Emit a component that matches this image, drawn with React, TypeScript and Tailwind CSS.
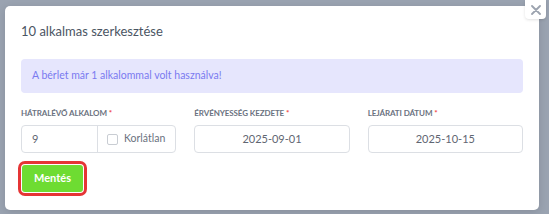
import * as React from 'react'

const FONT = { fontFamily: 'Lato, "Noto Sans", sans-serif' }

function Label({ text }: { text: string }) {
  return (
    <div className="mb-[6px] text-[8px] font-bold uppercase leading-[12px] tracking-[-0.1px] text-[#6b7280]">
      {text} <span className="text-[#ef4444]">*</span>
    </div>
  )
}

function DateField({ label, value }: { label: string; value: string }) {
  return (
    <div>
      <Label text={label} />
      <div className="flex h-[28px] items-center justify-center rounded-[4px] border border-[#dcdfe4] text-[11px] text-[#5f6672]">
        {value}
      </div>
    </div>
  )
}

export default function App() {
  return (
    <div
      className="relative h-[214px] w-[549px] overflow-hidden bg-[#9aa3b1] pl-[5px] pt-[6px]"
      style={FONT}
    >
      {/* modal */}
      <div className="flex h-[204px] w-[534px] flex-col rounded-[5px] bg-white px-[16px] pt-[17px] shadow-[0_2px_8px_rgba(0,0,0,0.12)]">
        <h2 className="text-[13px] font-normal leading-[16px] text-[#4b5563]">
          10 alkalmas szerkesztése
        </h2>

        <div className="mt-[20px] flex h-[34px] items-center rounded-[4px] bg-[#e6e6fd] px-[11px] text-[10.5px] text-[#7a7af0]">
          A bérlet már 1 alkalommal volt használva!
        </div>

        <div className="mt-[14px] grid grid-cols-3 gap-[18px]">
          <div>
            <Label text="Hátralévő alkalom" />
            <div className="flex h-[28px] rounded-[4px] border border-[#dcdfe4]">
              <div className="flex w-[76px] items-center border-r border-[#dcdfe4] pl-[10px] text-[11px] text-[#5f6672]">
                9
              </div>
              <div className="flex flex-1 items-center gap-[6px] pl-[9px] text-[10.5px] text-[#6b7280]">
                <span className="h-[11px] w-[11px] rounded-[2px] border border-[#c9cdd3]" />
                Korlátlan
              </div>
            </div>
          </div>
          <DateField label="Érvényesség kezdete" value="2025-09-01" />
          <DateField label="Lejárati dátum" value="2025-10-15" />
        </div>

        <button className="ml-px mt-[12px] flex h-[27px] w-[61px] items-center justify-center rounded-[3px] bg-[#6edc32] text-[11px] font-bold text-white ring-[3px] ring-[#e53535] ring-offset-1 ring-offset-white">
          Mentés
        </button>
      </div>

      {/* close button */}
      <button className="absolute right-[3px] top-0 flex h-[19px] w-[21px] items-center justify-center rounded-b-[4px] bg-white shadow-[0_1px_3px_rgba(0,0,0,0.12)]">
        <svg width="10" height="10" viewBox="0 0 10 10" fill="none" stroke="#9ca3af" strokeWidth="1.8" strokeLinecap="round">
          <path d="M1 1L9 9M9 1L1 9" />
        </svg>
      </button>
    </div>
  )
}
